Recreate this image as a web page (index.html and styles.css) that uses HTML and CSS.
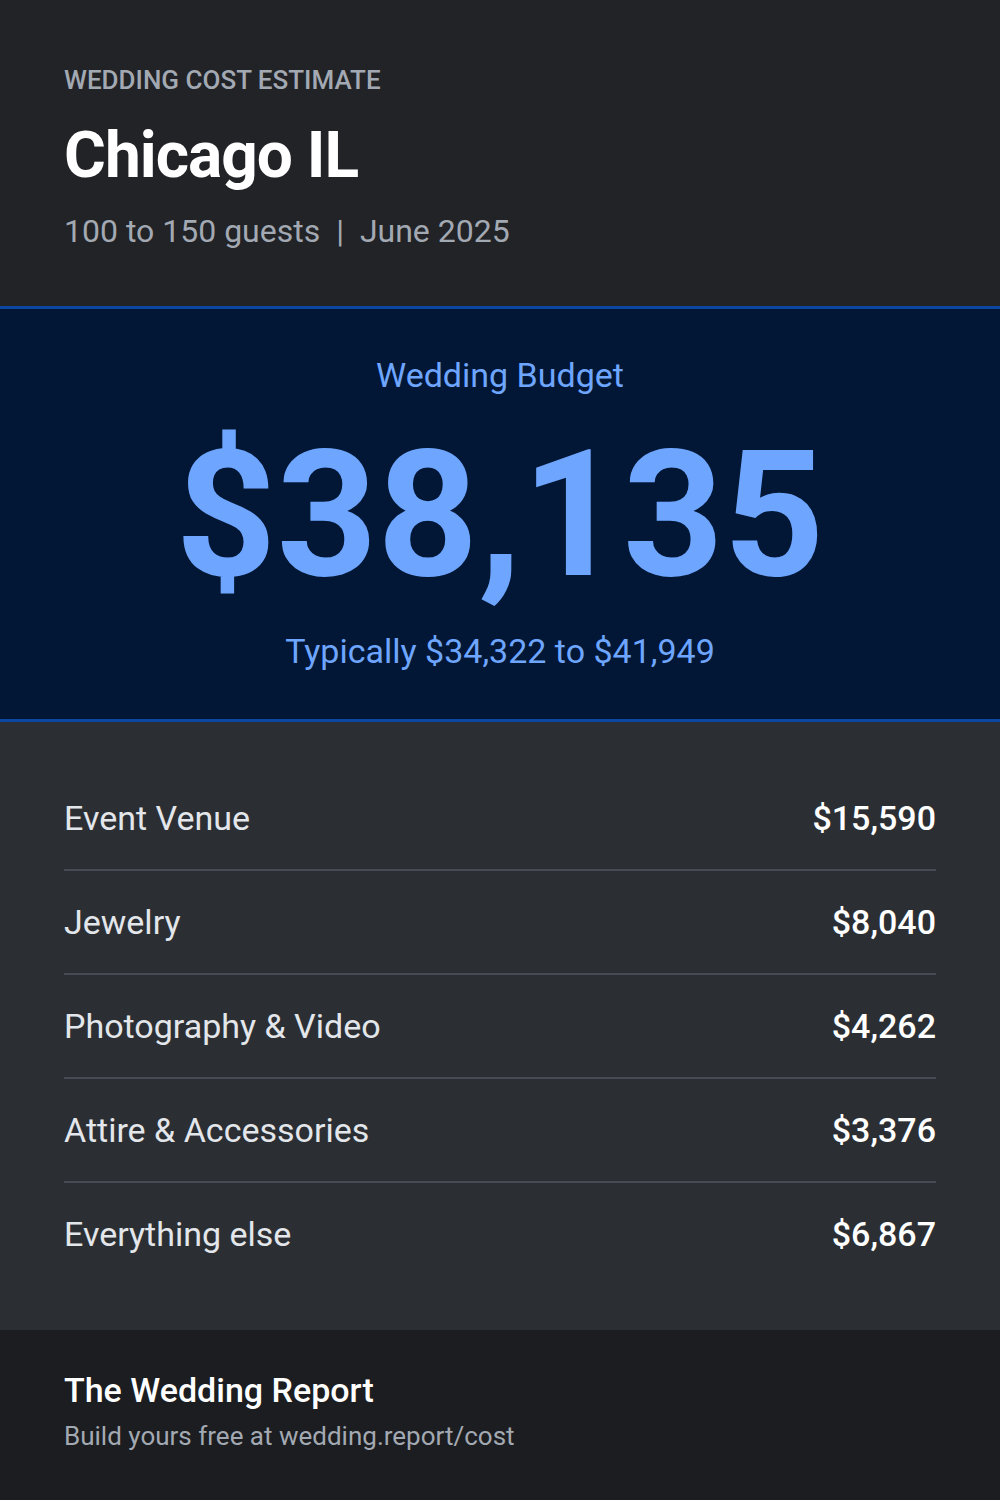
FILE: index.html
```html
<!DOCTYPE html>
<html lang="en">
<head>
    <meta charset="UTF-8">
    <meta name="viewport" content="width=device-width, initial-scale=1.0">
    <title>Wedding Cost Estimate</title>
    <link rel="stylesheet" href="styles.css">
</head>
<body>
    <div class="card">
        <header class="header">
            <div class="eyebrow">WEDDING COST ESTIMATE</div>
            <h1 class="city">Chicago IL</h1>
            <div class="meta">100 to 150 guests <span class="sep">|</span> June 2025</div>
        </header>

        <section class="budget">
            <div class="budget-label">Wedding Budget</div>
            <div class="budget-total">$38,135</div>
            <div class="budget-range">Typically $34,322 to $41,949</div>
        </section>

        <section class="items">
            <div class="item">
                <span class="item-name">Event Venue</span>
                <span class="item-cost">$15,590</span>
            </div>
            <div class="item">
                <span class="item-name">Jewelry</span>
                <span class="item-cost">$8,040</span>
            </div>
            <div class="item">
                <span class="item-name">Photography &amp; Video</span>
                <span class="item-cost">$4,262</span>
            </div>
            <div class="item">
                <span class="item-name">Attire &amp; Accessories</span>
                <span class="item-cost">$3,376</span>
            </div>
            <div class="item">
                <span class="item-name">Everything else</span>
                <span class="item-cost">$6,867</span>
            </div>
        </section>

        <footer class="footer">
            <div class="brand">The Wedding Report</div>
            <div class="cta">Build yours free at wedding.report/cost</div>
        </footer>
    </div>
</body>
</html>
```

FILE: styles.css
```css
body {
    margin: 0;
    padding: 0;
    font-family: Roboto, "Liberation Sans", sans-serif;
    background-color: #212327;
}

.card {
    width: 1000px;
    height: 1500px;
    display: flex;
    flex-direction: column;
}

.header {
    background-color: #212327;
    padding: 65px 64px 0;
    height: 306px;
    box-sizing: border-box;
}

.eyebrow {
    color: #a3a9b2;
    font-size: 26px;
    font-weight: 500;
    line-height: 30px;
}

.city {
    margin: 25px 0 0;
    color: #fff;
    font-size: 64px;
    font-weight: 700;
    line-height: 72px;
    letter-spacing: -1px;
}

.meta {
    margin-top: 19px;
    color: #a3a9b2;
    font-size: 32px;
    line-height: 40px;
}

.sep {
    margin: 0 8px;
}

.budget {
    background-color: #011735;
    border-top: 3px solid #0b47a0;
    border-bottom: 3px solid #0b47a0;
    height: 410px;
    text-align: center;
    color: #6ea6ff;
}

.budget-label {
    margin-top: 46px;
    font-size: 34px;
    line-height: 40px;
}

.budget-total {
    margin-top: 32px;
    font-size: 176px;
    font-weight: 700;
    line-height: 176px;
}

.budget-range {
    margin-top: 28px;
    font-size: 34px;
    line-height: 40px;
}

.items {
    background-color: #2b2f34;
    padding: 45px 64px 0;
    flex: 1;
}

.item {
    display: flex;
    justify-content: space-between;
    align-items: center;
    height: 102px;
    border-bottom: 2px solid #474c54;
}

.item:last-child {
    border-bottom: none;
}

.item-name {
    color: #e3e6ea;
    font-size: 34px;
}

.item-cost {
    color: #fff;
    font-size: 34px;
    font-weight: 500;
}

.footer {
    background-color: #1b1d20;
    height: 170px;
    padding: 40px 64px 0;
    box-sizing: border-box;
}

.brand {
    color: #fff;
    font-size: 34px;
    font-weight: 500;
    line-height: 40px;
}

.cta {
    margin-top: 10px;
    color: #a3a9b2;
    font-size: 26px;
    line-height: 32px;
}
```
